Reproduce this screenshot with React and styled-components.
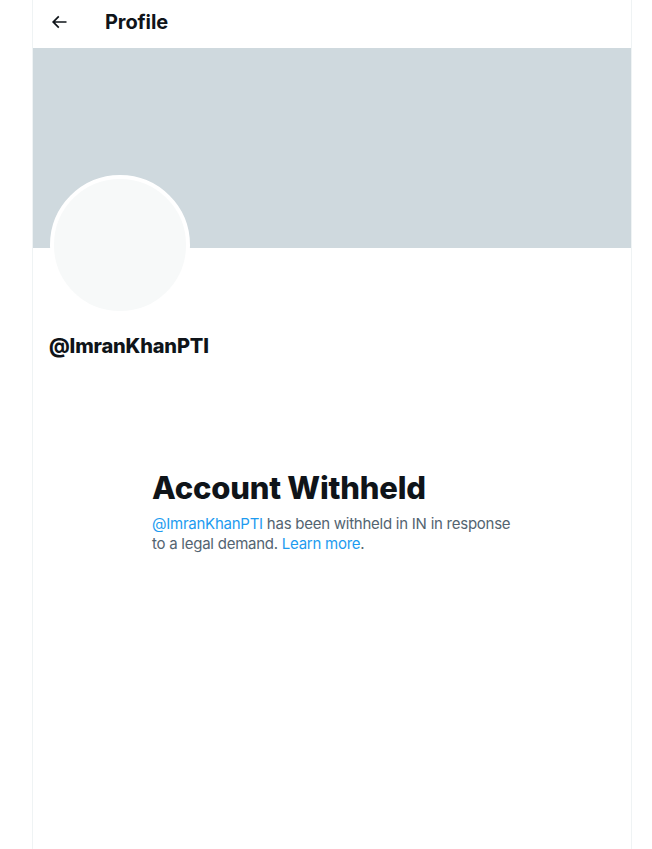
import React from "react";
import styled, { createGlobalStyle } from "styled-components";

const Global = createGlobalStyle`
  html, body { margin: 0; padding: 0; background: #ffffff; }
  body { font-family: Inter, "Noto Sans", "Liberation Sans", sans-serif; color: #0f1419; }
`;

const Column = styled.main`
  box-sizing: border-box;
  width: 600px;
  min-height: 849px;
  margin-left: 32px;
  border-left: 1px solid #eff3f4;
  border-right: 1px solid #eff3f4;
  background: #ffffff;
`;

const Header = styled.header`
  height: 48px;
  box-sizing: border-box;
  padding: 0 16px 4px;
  display: flex;
  align-items: center;
`;

const BackButton = styled.div`
  width: 56px;
  display: flex;
  align-items: center;
  color: #0f1419;
  svg { width: 20px; height: 20px; display: block; }
`;

const Title = styled.h2`
  margin: 0;
  font-size: 20px;
  line-height: 24px;
  font-weight: 700;
  letter-spacing: -0.1px;
`;

const Banner = styled.div`
  height: 200px;
  background: #cfd9de;
`;

const ProfileInfo = styled.div`
  padding: 0 16px;
`;

const Avatar = styled.div`
  box-sizing: border-box;
  width: 140px;
  height: 140px;
  margin-top: -73px;
  margin-left: 1px;
  border-radius: 50%;
  border: 4px solid #ffffff;
  background: #f7f9f9;
`;

const Handle = styled.div`
  margin-top: 19px;
  font-size: 20px;
  line-height: 24px;
  font-weight: 800;
  letter-spacing: -0.15px;
`;

const Empty = styled.section`
  width: 366px;
  margin: 112px 0 0 119px;
`;

const EmptyTitle = styled.h1`
  margin: 0 0 8px;
  font-size: 31px;
  line-height: 36px;
  font-weight: 800;
  letter-spacing: -0.2px;
`;

const EmptyText = styled.p`
  margin: 0;
  font-size: 15px;
  line-height: 20px;
  letter-spacing: -0.25px;
  color: #536471;
`;

const Link = styled.span`
  color: #1d9bf0;
`;

export default function App() {
  return (
    <>
      <Global />
      <Column>
        <Header>
          <BackButton>
            <svg viewBox="0 0 24 24" aria-hidden="true">
              <path fill="currentColor" d="M7.414 13l5.043 5.04-1.414 1.42L3.586 12l7.457-7.46 1.414 1.42L7.414 11H21v2H7.414z" />
            </svg>
          </BackButton>
          <Title>Profile</Title>
        </Header>
        <Banner />
        <ProfileInfo>
          <Avatar />
          <Handle>@ImranKhanPTI</Handle>
        </ProfileInfo>
        <Empty>
          <EmptyTitle>Account Withheld</EmptyTitle>
          <EmptyText>
            <Link>@ImranKhanPTI</Link> has been withheld in IN in response to a legal demand. <Link>Learn more</Link>.
          </EmptyText>
        </Empty>
      </Column>
    </>
  );
}
